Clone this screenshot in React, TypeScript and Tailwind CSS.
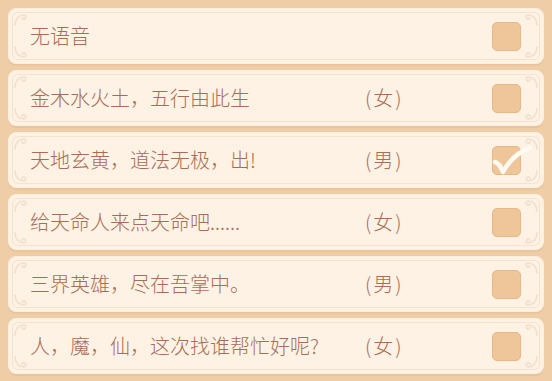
import React from 'react'

interface VoiceRow {
  id: number
  text: string
  gender?: string
  checked?: boolean
}

const rows: VoiceRow[] = [
  { id: 1, text: '无语音' },
  { id: 2, text: '金木水火土，五行由此生', gender: '(女)' },
  { id: 3, text: '天地玄黄，道法无极，出!', gender: '(男)', checked: true },
  { id: 4, text: '给天命人来点天命吧......', gender: '(女)' },
  { id: 5, text: '三界英雄，尽在吾掌中。', gender: '(男)' },
  { id: 6, text: '人，魔，仙，这次找谁帮忙好呢?', gender: '(女)' },
]

// little cloud curl in each corner of a card
function Swirl({ className, flip }: { className: string; flip?: string }) {
  return (
    <svg viewBox="0 0 14 14" className={`absolute w-[14px] h-[14px] ${className}`} style={flip ? { transform: flip } : undefined}>
      <path
        d="M2 12 C2 6 6 2 11 2 C13 2 13.5 5 11.5 6 C10 6.8 8.5 5.5 9.5 4.3"
        fill="none"
        stroke="#f0dfcb"
        strokeWidth="1.6"
        strokeLinecap="round"
      />
    </svg>
  )
}

function CheckBox({ checked }: { checked?: boolean }) {
  return (
    <div className="relative w-[29px] h-[29px] rounded-[5px] bg-[#efc699] border border-[#e8b987]">
      {checked && (
        <svg viewBox="0 0 44 36" className="absolute left-[-1px] top-[-5px] w-[44px] h-[36px]">
          <path
            d="M3 20 C6 21 9 25 11 30 C17 19 26 10 38 6"
            fill="none"
            stroke="#fffaf2"
            strokeWidth="4.5"
            strokeLinecap="round"
            strokeLinejoin="round"
          />
        </svg>
      )}
    </div>
  )
}

function Row({ row }: { row: VoiceRow }) {
  return (
    <div className="relative h-[56px] rounded-[8px] bg-[#fdf2e4] border border-[#fbeedd] shadow-[0_2px_0_#e9c59d] p-[3px]">
      <div className="h-full rounded-[6px] border border-[#f5e3ce] flex items-center pl-[17px] pr-[18px]">
        <span className="w-[335px] text-[20px] font-light text-[#a86d56] whitespace-nowrap">{row.text}</span>
        <span className="flex-1 text-[20px] font-light text-[#a86d56] tracking-[2px]">{row.gender}</span>
        <CheckBox checked={row.checked} />
      </div>
      <Swirl className="left-[4px] top-[4px]" />
      <Swirl className="left-[4px] bottom-[4px]" flip="scaleY(-1)" />
      <Swirl className="right-[4px] top-[4px]" flip="scaleX(-1)" />
      <Swirl className="right-[4px] bottom-[4px]" flip="scale(-1,-1)" />
    </div>
  )
}

export default function App() {
  return (
    <div
      className="w-[552px] h-[381px] bg-[#efcda6] px-[8px] pt-[8px] flex flex-col gap-[6px]"
      style={{ fontFamily: '"Noto Sans CJK SC", "Noto Sans", sans-serif' }}
    >
      {rows.map((r) => (
        <Row key={r.id} row={r} />
      ))}
    </div>
  )
}
